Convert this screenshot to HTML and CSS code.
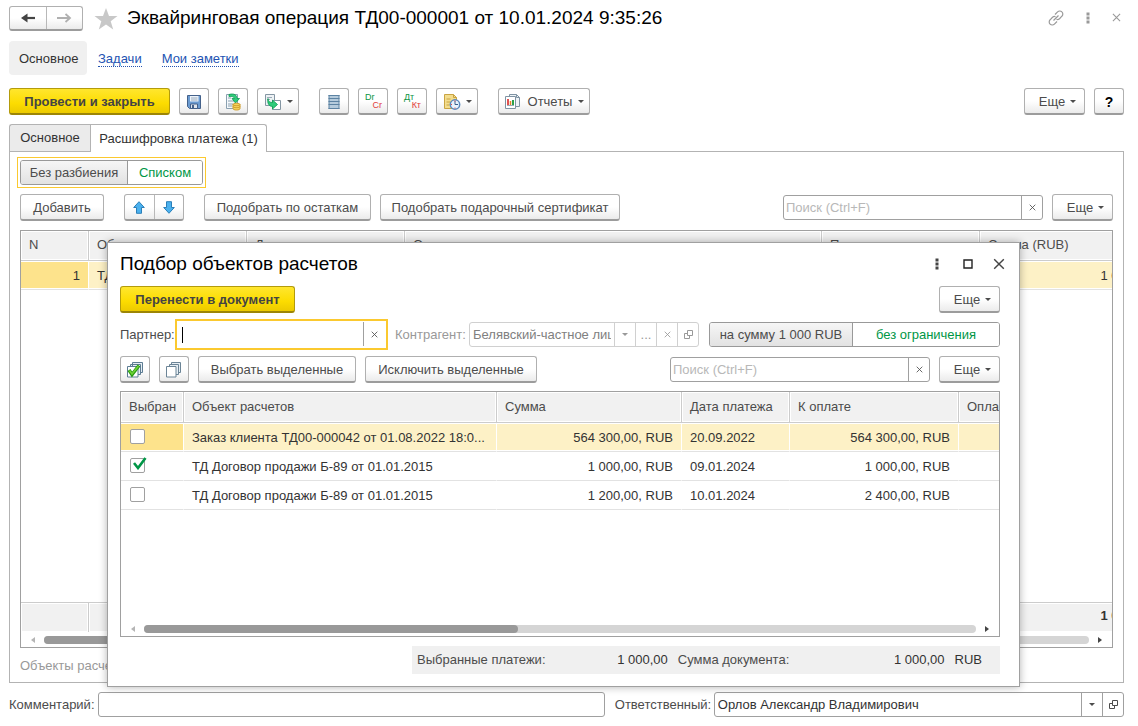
FILE: index.html
```html
<!DOCTYPE html>
<html lang="ru">
<head>
<meta charset="utf-8">
<title>Эквайринговая операция</title>
<link rel="stylesheet" href="styles.css">
</head>
<body>
<svg class="defs" aria-hidden="true">
  <symbol id="i-open" viewBox="0 0 11 11"><path d="M4.500 1.500h5v5h-5zM4.500 4.500h-3v5h5v-3" fill="none" stroke="currentColor"/></symbol>
  <symbol id="i-dots" viewBox="0 0 4 12"><path d="M.5.500h3v3h-3zM.5 4.500h3v3h-3zM.5 8.500h3v3h-3z" fill="currentColor"/></symbol>
  <symbol id="i-x" viewBox="0 0 10 10"><path d="M1 1l8 8M9 1l-8 8" stroke="currentColor" stroke-width="1.200" fill="none"/></symbol>
</svg>

<header class="titlebar">
  <div class="nav">
    <button aria-label="Назад"><svg width="16" height="12" viewBox="0 0 16 12"><path d="M15 6H4" stroke="#444" stroke-width="2.200"/><path d="M7.500 1.500v9L1 6z" fill="#444"/></svg></button>
    <button aria-label="Вперед"><svg width="16" height="12" viewBox="0 0 16 12"><path d="M1 6h12M9.500 2L14 6l-4.500 4" fill="none" stroke="#b0b0b0" stroke-width="1.800"/></svg></button>
  </div>
  <svg class="star" width="24" height="22" viewBox="0 0 24 22"><path d="M12 0l3 8h8.500l-6.800 5.200L19.200 21.500 12 16.500l-7.200 5 2.500-8.300L.5 8H9z" fill="#c8c8c8"/></svg>
  <h1>Эквайринговая операция ТД00-000001 от 10.01.2024 9:35:26</h1>
  <div class="tools">
    <svg width="16" height="16" viewBox="0 0 16 16" fill="none" stroke="#999" stroke-width="1.200"><path d="M7 4.500l2.600-2.600a3 3 0 0 1 4.300 0 3 3 0 0 1 0 4.300L11.500 8.700q-1.500 1.300-3 .6M9 11.500l-2.600 2.600a3 3 0 0 1-4.300 0 3 3 0 0 1 0-4.300L4.500 7.300q1.500-1.300 3-.6M5.500 10.500l5-5"/></svg>
    <svg width="4" height="12"><use href="#i-dots"/></svg>
    <svg width="9" height="9"><use href="#i-x"/></svg>
  </div>
</header>

<nav class="links">
  <span class="current">Основное</span>
  <a href="#">Задачи</a>
  <a href="#">Мои заметки</a>
</nav>

<div class="bar commands">
  <button class="btn primary post">Провести и закрыть</button>
  <button class="btn icon" aria-label="Записать"><svg width="16" height="16" viewBox="0 0 16 16"><path d="M1.500 1.500h13v13h-11l-2-2z" fill="#6b9bd1" stroke="#44618a"/><path d="M4 2h8.500v5.500H4z" fill="#edf3fa"/><path d="M5 4h6.500M5 6h6.500" stroke="#9ab"/><path d="M4.500 10h7v4.500h-7z" fill="#dfe5ec" stroke="#44618a"/><path d="M6 11h2v3H6z" fill="#44618a"/></svg></button>
  <button class="btn icon" aria-label="Провести"><svg width="18" height="18" viewBox="0 0 18 18"><path d="M2.500 1.500h11v14h-11z" fill="#f4f8fb" stroke="#8aa0b0"/><path d="M4 5h3M4 8h6M4 11h5M4 13h4" stroke="#8aa0b0"/><path d="M5 1.500c5-1.500 8 .5 8 4h2.500L11.500 10 8 5.500h2.500C10.500 4 8 3 5 3.500z" fill="#2fcb7a" stroke="#0b9a50" stroke-width=".8"/><path d="M9 11.500v4c0 2 7 2 7 0v-4c0-1.600-7-1.600-7 0z" fill="#f5d35c" stroke="#cf9c2a"/><path d="M9 11.500c0 1.500 7 1.500 7 0M9 13.500c0 1.500 7 1.500 7 0" fill="none" stroke="#cf9c2a"/></svg></button>
  <button class="btn icon drop" aria-label="Создать на основании"><svg width="18" height="18" viewBox="0 0 18 18"><path d="M1.500 1.500h9v11h-9z" fill="#eef2f5" stroke="#8496a3"/><path d="M3 4.500h5M3 6.500h3" stroke="#9aabb7"/><path d="M8.500 7.500h8v9h-8z" fill="#fff" stroke="#8496a3"/><path d="M4 5.500c0 3 2 4 4.500 4V7l5 4.500-5 4.500v-2.500C5 13.500 3 10 4 5.500z" fill="#2fcb7a" stroke="#0b9a50" stroke-width=".8"/></svg><i class="caret"></i></button>
  <span class="sep"></span>
  <button class="btn icon" aria-label="Движения"><svg width="12" height="16" viewBox="0 0 12 16"><path d="M1 1h10v14H1z" fill="#b5cbdc"/><path d="M.5 1.500h11M.5 4.500h11M.5 7.500h11M.5 10.500h11M.5 14.500h11M1 1v14M11 1v14" stroke="#5c83a3"/></svg></button>
  <button class="btn icon post-mark" aria-label="Dr Cr"><span class="dt">Dr</span><span class="kt">Cr</span></button>
  <button class="btn icon post-mark" aria-label="Дт Кт"><span class="dt">Дт</span><span class="kt">Кт</span></button>
  <button class="btn icon drop" aria-label="Файлы"><svg width="18" height="18" viewBox="0 0 18 18"><path d="M1.500 1.500h9l3 3v11h-12z" fill="#f3dd8e" stroke="#c9a443"/><path d="M10.500 1.500v3h3M3.500 6h4M3.500 9h4M3.500 12h3" fill="none" stroke="#c9a443"/><circle cx="12" cy="11.500" r="4.700" fill="#eaf3fd" stroke="#5a88bd" stroke-width="1.500"/><path d="M12 11.500V8M12 11.500h3" stroke="#3b5f8b"/><path d="M11.500 7.500h1v1h-1zM11.500 14.500h1v1h-1zM8 11h1v1H8z" fill="#e44"/></svg><i class="caret"></i></button>
  <span class="sep"></span>
  <button class="btn reports"><svg width="18" height="17" viewBox="0 0 18 17"><path d="M5.500 1.500h7l3 3v9h-10z" fill="#eef3f7" stroke="#7f93a3"/><path d="M12.500 1.500v3h3" fill="none" stroke="#7f93a3"/><path d="M1.500 3.500h10v12h-10z" fill="#fff" stroke="#7f93a3"/><path d="M4 6v6" stroke="#e05252" stroke-width="2"/><path d="M6.500 8v4" stroke="#e0812c" stroke-width="1.500"/><path d="M9 7v5" stroke="#2aa24a" stroke-width="2"/><path d="M3 12.500h7" stroke="#9ab"/></svg><span>Отчеты</span><i class="caret"></i></button>
  <span class="grow"></span>
  <button class="btn more">Еще<i class="caret"></i></button>
  <button class="btn icon help">?</button>
</div>

<div class="tabs" role="tablist">
  <button role="tab" class="tab">Основное</button>
  <button role="tab" class="tab active" aria-selected="true">Расшифровка платежа (1)</button>
</div>

<main class="panel">
  <div class="focus-ring">
    <div class="segment">
      <button class="off split">Без разбиения</button><button class="on list">Списком</button>
    </div>
  </div>
  <div class="bar">
    <button class="btn add">Добавить</button>
    <span class="sep"></span>
    <div class="pair">
      <button aria-label="Вверх"><svg width="12" height="13" viewBox="0 0 12 13"><path d="M6 .7l5.300 5.800H8.500v5.800h-5V6.500H.7z" fill="#4bb1ee" stroke="#2b7fb8"/></svg></button>
      <button aria-label="Вниз"><svg width="12" height="13" viewBox="0 0 12 13"><path d="M6 12.300L.7 6.500h2.800V.7h5v5.800h2.800z" fill="#4bb1ee" stroke="#2b7fb8"/></svg></button>
    </div>
    <span class="sep"></span>
    <button class="btn rest">Подобрать по остаткам</button>
    <button class="btn gift">Подобрать подарочный сертификат</button>
    <span class="grow"></span>
    <div class="field search"><input type="text" placeholder="Поиск (Ctrl+F)" aria-label="Поиск"><button aria-label="Очистить"><svg width="7" height="7"><use href="#i-x"/></svg></button></div>
    <button class="btn more">Еще<i class="caret"></i></button>
  </div>

  <div class="grid main-grid">
    <table>
      <colgroup><col class="m1"><col class="m2"><col class="m2"><col class="m4"><col class="m2"><col class="m6"></colgroup>
      <thead><tr><th>N</th><th>Объект</th><th>Дата</th><th>Основание</th><th>Партнер</th><th>Сумма (RUB)</th></tr></thead>
      <tbody><tr class="sel"><td class="num cur">1</td><td>ТД</td><td></td><td></td><td></td><td class="num">1 000,00</td></tr></tbody>
    </table>
    <span class="grow"></span>
    <table class="totals">
      <colgroup><col class="m1"><col class="m2"><col class="m2"><col class="m4"><col class="m2"><col class="m6"></colgroup>
      <tbody><tr><td></td><td></td><td></td><td></td><td></td><td class="num">1 000,00</td></tr></tbody>
    </table>
    <div class="scroll"><i class="arrow left"></i><div class="track"><div class="thumb"></div></div><i class="arrow right"></i></div>
  </div>
  <p class="hint">Объекты расчетов</p>
</main>

<footer class="bottom">
  <label for="comment">Комментарий:</label>
  <div class="field comment"><input type="text" id="comment"></div>
  <label for="owner">Ответственный:</label>
  <div class="field owner"><input type="text" id="owner" value="Орлов Александр Владимирович"><button aria-label="Выбрать"><i class="caret"></i></button><button aria-label="Открыть"><svg width="11" height="11"><use href="#i-open"/></svg></button></div>
</footer>

<section class="dialog" role="dialog" aria-labelledby="dlg-title">
  <header>
    <h2 id="dlg-title">Подбор объектов расчетов</h2>
    <button aria-label="Меню"><svg width="4" height="12"><use href="#i-dots"/></svg></button>
    <button aria-label="Развернуть"><svg width="10" height="10" viewBox="0 0 10 10"><path d="M1 1h8v8H1z" fill="none" stroke="#222" stroke-width="1.400"/></svg></button>
    <button aria-label="Закрыть"><svg width="12" height="12"><use href="#i-x"/></svg></button>
  </header>
  <div class="bar">
    <button class="btn primary move">Перенести в документ</button>
    <span class="grow"></span>
    <button class="btn more">Еще<i class="caret"></i></button>
  </div>
  <div class="filters">
    <label for="partner">Партнер:</label>
    <div class="field partner"><input type="text" id="partner"><button aria-label="Очистить"><svg width="7" height="7"><use href="#i-x"/></svg></button></div>
    <label for="agent" class="dim">Контрагент:</label>
    <div class="field agent"><input type="text" id="agent" value="Белявский-частное лицо" readonly><button aria-label="Список"><i class="caret"></i></button><button>...</button><button aria-label="Очистить"><svg width="7" height="7"><use href="#i-x"/></svg></button><button aria-label="Открыть"><svg width="11" height="11"><use href="#i-open"/></svg></button></div>
    <div class="segment limit"><button class="off">на сумму 1 000 RUB</button><button class="on">без ограничения</button></div>
  </div>
  <div class="bar picks">
    <button class="btn icon" aria-label="Отметить все"><svg width="18" height="18" viewBox="0 0 18 18"><path d="M6.500 5V1.500h10v10H14M4.500 6V3.500h10v10H12" fill="#e6eef4" stroke="#5d7c93"/><path d="M1.500 5.500h10.500v10.500H1.500z" fill="#fff" stroke="#5d7c93"/><path d="M3 9l3 4.500L13 4.500" fill="none" stroke="#279a12" stroke-width="3.400"/><path d="M3.500 9.500l2.500 3.500L12.500 5" fill="none" stroke="#6fd235" stroke-width="1.600"/></svg></button>
    <button class="btn icon" aria-label="Снять отметки"><svg width="18" height="18" viewBox="0 0 18 18" stroke="#6b8496"><path d="M6.500 1.500h9v10h-9z" fill="#e6eef4"/><path d="M4.500 3.500h9v10h-9z" fill="#e6eef4"/><path d="M1.500 5.500h9.500v10.500H1.500z" fill="#fff"/></svg></button>
    <button class="btn take">Выбрать выделенные</button>
    <button class="btn drop-rows">Исключить выделенные</button>
    <span class="grow"></span>
    <div class="field search"><input type="text" placeholder="Поиск (Ctrl+F)" aria-label="Поиск"><button aria-label="Очистить"><svg width="7" height="7"><use href="#i-x"/></svg></button></div>
    <button class="btn more">Еще<i class="caret"></i></button>
  </div>
  <div class="grid pick-grid">
    <table>
      <colgroup><col class="d1"><col class="d2"><col class="d3"><col class="d4"><col class="d5"><col class="d6"></colgroup>
      <thead><tr><th>Выбран</th><th>Объект расчетов</th><th>Сумма</th><th>Дата платежа</th><th>К оплате</th><th>Оплачено</th></tr></thead>
      <tbody>
        <tr class="sel"><td class="cur"><input type="checkbox" aria-label="Выбран"></td><td>Заказ клиента ТД00-000042 от 01.08.2022 18:0...</td><td class="num">564 300,00, RUB</td><td>20.09.2022</td><td class="num">564 300,00, RUB</td><td></td></tr>
        <tr><td><input type="checkbox" aria-label="Выбран" checked></td><td>ТД Договор продажи Б-89 от 01.01.2015</td><td class="num">1 000,00, RUB</td><td>09.01.2024</td><td class="num">1 000,00, RUB</td><td></td></tr>
        <tr><td><input type="checkbox" aria-label="Выбран"></td><td>ТД Договор продажи Б-89 от 01.01.2015</td><td class="num">1 200,00, RUB</td><td>10.01.2024</td><td class="num">2 400,00, RUB</td><td></td></tr>
      </tbody>
    </table>
    <span class="grow"></span>
    <div class="scroll"><i class="arrow left"></i><div class="track"><div class="thumb"></div></div><i class="arrow right"></i></div>
  </div>
  <div class="summary">
    <div class="picked"><span>Выбранные платежи:</span><output>1 000,00</output></div>
    <div class="total"><span>Сумма документа:</span><output>1 000,00</output></div>
    <span class="currency">RUB</span>
  </div>
</section>
</body>
</html>
```
FILE: styles.css
```css
* { box-sizing: border-box; }
body {
  margin: 0;
  padding: 6px 14px 9px 9px;
  min-height: 100vh;
  display: flex;
  flex-direction: column;
  position: relative;
  background: #fff;
  color: #4c4c4c;
  font: 13px/16px "Liberation Sans", Arial, sans-serif;
}
button, input { font: inherit; color: inherit; margin: 0; }
button { background: none; border: 0; padding: 0; display: flex; align-items: center; justify-content: center; white-space: nowrap; }
svg { display: block; flex: none; }
.defs { position: absolute; width: 0; height: 0; }
.grow { flex: 1; }

.titlebar { display: flex; align-items: center; height: 25px; }
.nav, .pair {
  display: flex;
  border: 1px solid #b0b0b0;
  border-bottom: 2px solid #9c9c9c;
  border-radius: 3px;
  background: linear-gradient(#fff 50%, #ebebeb);
}
.nav { width: 74px; height: 25px; }
.nav button, .pair button { flex: 1; }
.nav button + button, .pair button + button { border-left: 1px solid #b8b8b8; }
.star { margin: 0 9px 0 11px; }
h1, h2 { margin: 0; color: #000; font-weight: normal; white-space: nowrap; font-size: 19px; line-height: 24px; flex: 1; }
h1 { padding-bottom: 2px; }
.tools { display: flex; align-items: center; gap: 22px; color: #999; padding: 0 3px 2px 0; }

.links { display: flex; align-items: center; margin-top: 10px; height: 34px; }
.links .current { background: #f0f0f0; border-radius: 4px; padding: 10px 10px 8px; width: 78px; color: #333; margin-right: 11px; }
.links a { color: #2353b2; text-decoration: none; border-bottom: 1px dotted #2353b2; line-height: 14px; margin: 2px 20px 0 0; }

.bar { display: flex; align-items: center; gap: 9px; height: 27px; }
.commands { margin-top: 13px; }
.sep { width: 2px; }
.btn {
  height: 27px;
  padding-top: 1px;
  border: 1px solid #b0b0b0;
  border-bottom: 2px solid #9c9c9c;
  border-radius: 3px;
  background: linear-gradient(#fff 50%, #ebebeb);
}
.primary { background: linear-gradient(#ffe62e, #fcdc00 60%, #ecca00); border-color: #b39b0b; border-bottom-color: #9c8506; font-weight: bold; color: #444; }
.icon { width: 30px; }
.drop { width: 42px; gap: 5px; }
.more { width: 61px; gap: 5px; padding-left: 6px; }
.post { width: 161px; }
.reports { width: 92px; gap: 6px; }
.add { width: 84px; }
.rest { width: 167px; }
.gift { width: 240px; }
.help { font-weight: bold; color: #000; font-size: 14px; }
.caret { border: 3px solid transparent; border-top-color: currentColor; border-bottom: 0; }
.post-mark { flex-direction: column; font-size: 9px; line-height: 8px; padding-bottom: 2px; }
.dt { color: #0b9444; align-self: flex-start; margin-left: 6px; }
.kt { color: #e23b3b; align-self: flex-end; margin-right: 5px; }
.pair { width: 60px; height: 27px; }

.tabs { display: flex; margin-top: 9px; height: 28px; margin-bottom: -1px; z-index: 1; }
.tab { border: 1px solid #b3b3b3; border-right: 0; background: #ebebeb; border-radius: 3px 0 0 0; width: 81px; padding: 0; color: #333; }
.tab.active { background: #fff; border-right: 1px solid #b3b3b3; border-bottom: 0; border-radius: 0 3px 0 0; width: 177px; }

.panel { flex: 1; display: flex; flex-direction: column; border: 1px solid #b3b3b3; padding: 4px 10px 8px; }
.focus-ring { align-self: flex-start; border: 1px solid #fbc92f; padding: 2px; margin: 1px 0 6px -3px; }
.segment { display: flex; height: 25px; border: 1px solid #999; border-radius: 3px; overflow: hidden; }
.segment .off { background: linear-gradient(#f6f6f6, #e2e2e2); border-right: 1px solid #999; }
.segment .on { color: #009646; background: #fff; }
.split { width: 107px; }
.list { width: 74px; }

.field { display: flex; height: 25px; border: 1px solid #a0a0a0; border-radius: 3px; background: #fff; }
.field input { flex: 1; min-width: 0; border: 0; outline: 0; background: none; padding: 0 3px; color: #333; }
.field input::placeholder { color: #b8b8b8; opacity: 1; }
.field button { width: 21px; border-left: 1px solid #a0a0a0; }
.search { width: 260px; }
.search input { padding: 0 2px; }

.grid { display: flex; flex-direction: column; border: 1px solid #a0a0a0; overflow: hidden; background: #fff; }
.main-grid { flex: 1; margin-top: 9px; }
table { table-layout: fixed; border-collapse: separate; border-spacing: 0; width: 100%; flex: none; }
th { height: 31px; text-align: left; font-weight: normal; background: #f1f1f1; border-right: 1px solid #ccc; border-bottom: 1px solid #ccc; box-shadow: inset 0 0 0 1px #fff; }
th, td { padding: 0 8px; white-space: nowrap; overflow: hidden; }
td { height: 29px; padding-top: 1px; color: #333; border-bottom: 1px solid #e2e2e2; border-right: 1px solid transparent; }
.num { text-align: right; }
.sel td { background: #fdf1c6; border-right-color: #fff; box-shadow: inset 0 1px #fff, inset 0 -1px #fff; }
.sel .cur { background: #fde38c; }
.main-grid table { width: 1139px; }
.main-grid th { height: 30px; padding-bottom: 1px; }
.m1 { width: 68px; }
.m2 { width: 158px; }
.m4 { width: 417px; }
.m6 { width: 180px; }
.totals td { height: 30px; padding-top: 0; padding-bottom: 4px; background: #f1f1f1; border: 0; border-top: 1px solid #ccc; border-right: 1px solid #ccc; font-weight: bold; box-shadow: inset 0 0 0 1px #fff; }
.scroll { display: flex; align-items: center; height: 15px; padding: 0 10px; flex: none; }
.track { flex: 1; height: 8px; margin: 0 9px; border-radius: 4px; background: #d5d5d5; }
.thumb { height: 8px; width: 45%; border-radius: 4px; background: #999; }
.arrow { border: 3px solid transparent; }
.arrow.left { border-right: 4px solid #b5b5b5; border-left: 0; }
.arrow.right { border-left: 4px solid #444; border-right: 0; }
.hint { margin: 10px 0 0; color: #999; }

.bottom { display: flex; align-items: center; margin-top: 9px; height: 25px; }
.bottom label:first-child { width: 89px; }
.bottom label:nth-of-type(2) { width: 100px; padding-left: 1px; }
.comment { flex: 507; margin-right: 9px; }
.owner { flex: 410; }

.dialog {
  position: absolute;
  top: 242px;
  left: 107px;
  right: 118px;
  z-index: 2;
  padding: 0 19px 12px 12px;
  border: 1px solid #a0a0a0;
  background: #fff;
  box-shadow: 0 0 8px rgba(0, 0, 0, .3);
}
.dialog header { display: flex; align-items: center; height: 41px; margin-bottom: 2px; }
.dialog header button { width: 31px; height: 31px; color: #444; }
.dialog header button:last-child { margin-right: -14px; }
.move { width: 175px; }
.filters { display: flex; align-items: center; margin-top: 6px; height: 31px; }
.filters label { width: 55px; white-space: nowrap; }
.filters label.dim { width: 74px; margin-left: 7px; color: #999; }
.partner { width: 213px; height: 31px; border: 2px solid #fbc92f; border-radius: 0; padding: 1px; }
.partner input { background: linear-gradient(#000, #000) 4px 50% / 1px 16px no-repeat; }
.partner button { width: 22px; height: 24px; }
.agent { width: 230px; border-color: #d0d0d0; color: #999; }
.agent input { color: #808080; margin-right: 3px; padding-right: 0; }
.agent button { border-color: #d0d0d0; }
.limit { flex: 1; margin-left: 10px; }
.limit .off { width: 143px; }
.limit .on { flex: 1; }
.picks { margin-top: 6px; }
.take { width: 158px; }
.drop-rows { width: 172px; }
.pick-grid { margin-top: 8px; height: 246px; }
.pick-grid table { width: 958px; }
.d1 { width: 63px; }
.d2 { width: 313px; }
.d3 { width: 185px; }
.d4 { width: 108px; }
.d5 { width: 169px; }
.d6 { width: 120px; }
input[type="checkbox"] { appearance: none; display: block; position: relative; width: 15px; height: 15px; margin: 0 0 2px 1px; border: 1px solid #a0a0a0; border-radius: 2px; background: #fff; }
input[type="checkbox"]:checked::after {
  content: "";
  position: absolute;
  left: 2px;
  top: -2px;
  width: 14px;
  height: 13px;
  background: url("data:image/svg+xml,%3Csvg xmlns='http://www.w3.org/2000/svg' viewBox='0 0 14 13'%3E%3Cpath d='M1 6l4 5L12.500 1' fill='none' stroke='%23009646' stroke-width='2.600'/%3E%3C/svg%3E");
}
.summary { display: flex; align-items: center; gap: 10px; height: 28px; margin: 9px 0 0 292px; padding: 0 18px 0 5px; background: #f0f0f0; }
.picked, .total { display: flex; justify-content: space-between; }
.picked { flex: 251; }
.total { flex: 267; }
.summary output, .currency { color: #333; }
```
